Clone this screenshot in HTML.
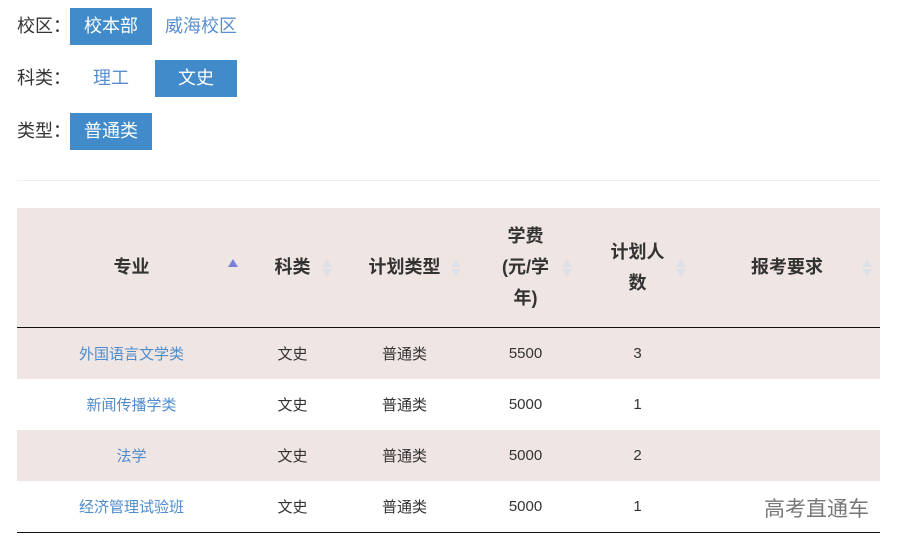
<!DOCTYPE html>
<html><head><meta charset="utf-8"><style>
body{margin:0;background:#fff;font-family:"Liberation Sans","Noto Sans CJK SC",sans-serif;width:901px;height:548px;overflow:hidden;position:relative;color:#333}
.a{position:absolute;font-size:18px;line-height:37px;white-space:nowrap}
.btn{position:absolute;background:#428bca;color:#fff;font-size:18px;width:82px;height:37px;line-height:37px;text-align:center}
.lk{color:#5a8fcf}
.sep{position:absolute;left:17px;top:180px;width:863px;height:1px;background:#eee}
table{position:absolute;left:17px;top:208px;width:863px;border-collapse:collapse;font-size:15px}
th{height:119px;background:#efe5e3;font-size:18px;line-height:31px;font-weight:bold;color:#333;position:relative;border-bottom:1px solid #111;padding:0}
td{height:51px;text-align:center;padding:0;color:#333}
tr.o td{background:#efe5e3}
tr:last-child td{border-bottom:1px solid #111}
td.m{color:#4f8ccc}
.s{position:absolute;top:50%;margin-top:-10px;width:11px;height:20px}
.s:before,.s:after{content:"";position:absolute;left:0;border-left:5.5px solid transparent;border-right:5.5px solid transparent}
.s:before{top:1px;border-bottom:8px solid #dde0e6}
.s:after{bottom:1px;border-top:8px solid #dde0e6}
.s.up:before{border-bottom-color:#7b7fd8}
.s.up:after{border-top-color:transparent}
.wm{position:absolute;left:764px;top:493px;font-size:21px;color:#777}
</style></head><body>
<div class="a" style="left:17px;top:8px">校区：</div>
<div class="btn" style="left:70px;top:8px">校本部</div>
<div class="a lk" style="left:165px;top:8px">威海校区</div>
<div class="a" style="left:17px;top:60px">科类：</div>
<div class="a lk" style="left:93px;top:60px">理工</div>
<div class="btn" style="left:155px;top:60px">文史</div>
<div class="a" style="left:17px;top:113px">类型：</div>
<div class="btn" style="left:70px;top:113px">普通类</div>
<div class="sep"></div>
<table>
<tr>
<th style="width:229px">专业<span class="s up" style="left:211px"></span></th>
<th style="width:93px">科类<span class="s" style="right:6px"></span></th>
<th style="width:131px">计划类型<span class="s" style="right:8px"></span></th>
<th style="width:111px">学费<br>(元/学<br>年)<span class="s" style="right:8px"></span></th>
<th style="width:113px">计划人<br>数<span class="s" style="right:7px"></span></th>
<th>报考要求<span class="s" style="right:7px"></span></th>
</tr>
<tr class="o"><td class="m">外国语言文学类</td><td>文史</td><td>普通类</td><td>5500</td><td>3</td><td></td></tr>
<tr><td class="m">新闻传播学类</td><td>文史</td><td>普通类</td><td>5000</td><td>1</td><td></td></tr>
<tr class="o"><td class="m">法学</td><td>文史</td><td>普通类</td><td>5000</td><td>2</td><td></td></tr>
<tr><td class="m">经济管理试验班</td><td>文史</td><td>普通类</td><td>5000</td><td>1</td><td></td></tr>
</table>
<div class="wm">高考直通车</div>
</body></html>
